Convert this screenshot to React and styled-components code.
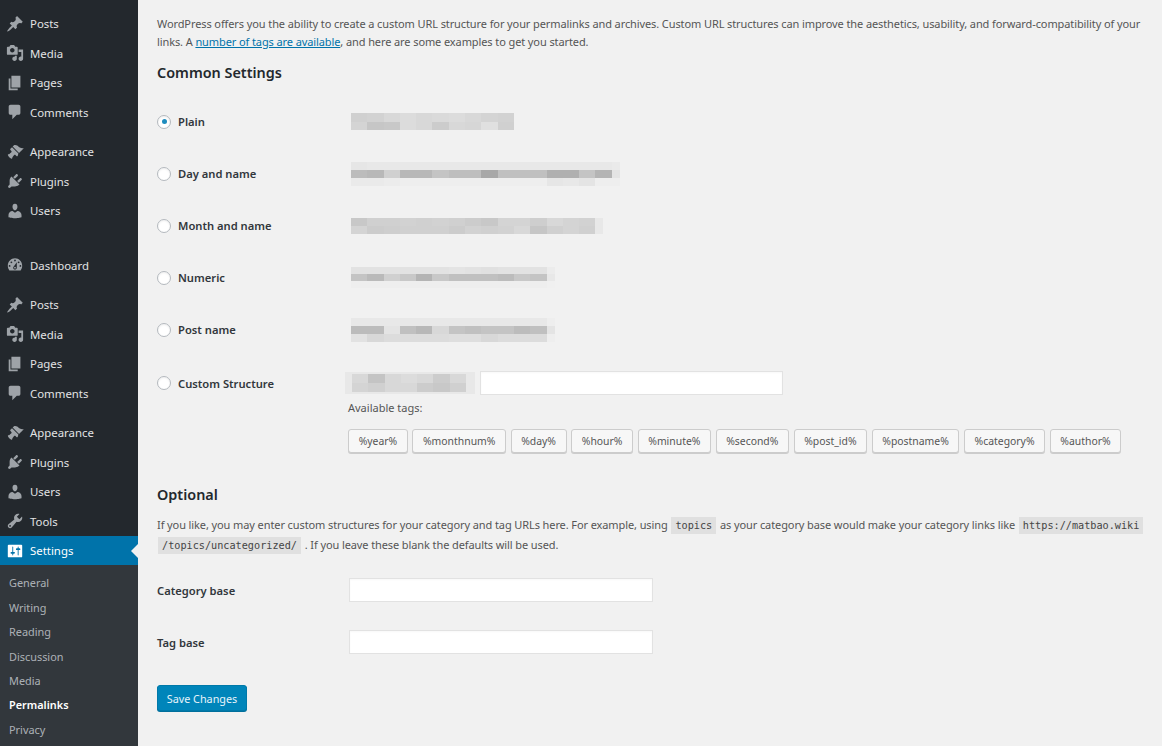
import * as React from 'react';
import styled, { createGlobalStyle } from 'styled-components';

const GlobalStyle = createGlobalStyle`
  html, body {
    margin: 0;
    height: 100%;
    overflow: hidden;
    background: #f1f1f1;
  }
  body {
    font-family: "Noto Sans", "Open Sans", sans-serif;
    font-size: 12px;
    color: #444;
  }
`;

const ICONS = {
  dashboard: 'M3.76 16h12.48c1.1-1.43 1.76-3.21 1.76-5.14 0-4.62-3.58-8.36-8-8.36s-8 3.74-8 8.36c0 1.93.66 3.71 1.76 5.14zM10 4c.55 0 1 .45 1 1s-.45 1-1 1-1-.45-1-1 .45-1 1-1zM6 6c.55 0 1 .45 1 1s-.45 1-1 1-1-.45-1-1 .45-1 1-1zm8 0c.55 0 1 .45 1 1s-.45 1-1 1-1-.45-1-1 .45-1 1-1zm-5.37 5.55L12 7v6c0 1.1-.9 2-2 2s-2-.9-2-2c0-.57.24-1.08.63-1.45zM4 10c.55 0 1 .45 1 1s-.45 1-1 1-1-.45-1-1 .45-1 1-1zm12 0c.55 0 1 .45 1 1s-.45 1-1 1-1-.45-1-1 .45-1 1-1zm-5 3c0-.55-.45-1-1-1s-1 .45-1 1 .45 1 1 1 1-.45 1-1z',
  posts: 'M10.44 3.02l1.82-1.82 6.36 6.35-1.83 1.82c-1.05-.68-2.48-.57-3.41.36l-.75.75c-.92.93-1.04 2.35-.35 3.41l-1.83 1.82-2.41-2.41-2.8 2.79c-.42.42-3.38 2.71-3.8 2.29s1.86-3.39 2.28-3.81l2.79-2.79L4.1 9.36l1.83-1.82c1.05.69 2.48.57 3.4-.36l.75-.75c.93-.92 1.05-2.35.36-3.41z',
  media: 'M13 11V4c0-.55-.45-1-1-1h-1.67L9 1H5L3.67 3H2c-.55 0-1 .45-1 1v7c0 .55.45 1 1 1h10c.55 0 1-.45 1-1zM7 4.5c1.38 0 2.5 1.12 2.5 2.5S8.38 9.5 7 9.5 4.5 8.38 4.5 7 5.62 4.5 7 4.5zM14 6h5v10.5c0 1.38-1.12 2.5-2.5 2.5S14 17.88 14 16.5s1.12-2.5 2.5-2.5c.17 0 .34.02.5.05V9h-3V6zm-4 8.05V13h2v3.5c0 1.38-1.12 2.5-2.5 2.5S7 17.88 7 16.5 8.12 14 9.5 14c.17 0 .34.02.5.05z',
  pages: 'M6 15V2h10v13H6zm-1 1h8v2H3V5h2v11z',
  comments: 'M5 2h9c1.1 0 2 .9 2 2v7c0 1.1-.9 2-2 2h-2l-5 5v-5H5c-1.1 0-2-.9-2-2V4c0-1.1.9-2 2-2z',
  appearance: 'M14.48 11.06L7.41 3.99l1.5-1.5c.5-.56 2.3-.47 3.51.32 1.21.8 1.43 1.28 2.91 2.1 1.18.64 2.45 1.26 4.45.85zm-.71.71L6.7 4.7 4.93 6.47c-.39.39-.39 1.02 0 1.41l1.06 1.06c.39.39.39 1.03 0 1.42-.6.6-1.43 1.27-2.21 1.73-.57.33-1.46.5-1.5.54-1.24 1.24 3.3 5.77 4.53 4.53.05-.04.22-.93.55-1.5.45-.78 1.13-1.61 1.73-2.21.39-.39 1.03-.39 1.42 0l1.06 1.06c.39.39 1.02.39 1.41 0z',
  plugins: 'M13.11 4.36L9.87 7.6 8 5.73l3.24-3.24c.35-.34 1.05-.2 1.56.32.52.51.66 1.21.31 1.55zm-8 1.77l.91-1.12 9.01 9.01-1.19.84c-.71.71-2.63 1.16-3.82 1.16H6.14L4.9 17.26c-.59.59-1.54.59-2.12 0-.59-.58-.59-1.53 0-2.12l1.24-1.24v-3.88c0-1.13.4-3.19 1.09-3.89zm7.26 3.97l3.24-3.24c.34-.35 1.04-.21 1.55.31.52.51.66 1.21.31 1.55l-3.24 3.25z',
  users: 'M10 9.25c-2.27 0-2.73-3.44-2.73-3.44C7 4.02 7.82 2 9.97 2c2.16 0 2.98 2.02 2.71 3.81 0 0-.41 3.44-2.68 3.44zm0 2.57L12.72 10c2.39 0 4.52 2.33 4.52 4.53v2.49s-3.65 1.13-7.24 1.13c-3.65 0-7.24-1.13-7.24-1.13v-2.49c0-2.25 1.94-4.5 4.52-4.5z',
  tools: 'M16.68 9.77c-1.34 1.34-3.3 1.67-4.95.99l-5.41 6.52c-.99.99-2.59.99-3.57 0-.99-.98-.99-2.58 0-3.57l6.52-5.42c-.68-1.65-.35-3.61.99-4.95 1.28-1.28 3.12-1.62 4.72-1.06l-2.89 2.89 2.82 2.82 2.89-2.89c.56 1.6.22 3.44-1.06 4.72zM3.81 16.21c.4.39 1.03.39 1.42 0 .4-.4.4-1.03 0-1.43-.39-.39-1.02-.39-1.42 0-.39.4-.39 1.03 0 1.43z',
  settings: 'M18 16V4c0-.55-.45-1-1-1H3c-.55 0-1 .45-1 1v12c0 .55.45 1 1 1h14c.55 0 1-.45 1-1zM8 11h1c.55 0 1 .45 1 1s-.45 1-1 1H8v1.5c0 .28-.22.5-.5.5s-.5-.22-.5-.5V13H6c-.55 0-1-.45-1-1s.45-1 1-1h1V5.5c0-.28.22-.5.5-.5s.5.22.5.5V11zm5-2h-1c-.55 0-1-.45-1-1s.45-1 1-1h1V5.5c0-.28.22-.5.5-.5s.5.22.5.5V7h1c.55 0 1 .45 1 1s-.45 1-1 1h-1v5.5c0 .28-.22.5-.5.5s-.5-.22-.5-.5V9z',
};

const MENU_TOP = [
  ['posts', 'Posts'], ['media', 'Media'], ['pages', 'Pages'], ['comments', 'Comments'],
];
const MENU_MID = [['appearance', 'Appearance'], ['plugins', 'Plugins'], ['users', 'Users']];

const SUBMENU = ['General', 'Writing', 'Reading', 'Discussion', 'Media', 'Permalinks', 'Privacy'];

const TAGS = ['%year%', '%monthnum%', '%day%', '%hour%', '%minute%', '%second%', '%post_id%', '%postname%', '%category%', '%author%'];

// greys of each pixelated block, one string per row, one hex pair per cell
const BLOCKS = {
  plain: { width: 163, rows: ['d0 d2 d8 dc d8 da dc d8 d4 d2', 'd4 c6 c8 dc d8 cc d8 d6 e0 d0'] },
  day: { width: 269, rows: ['e6 e8 e8 e8 e8 e8 e8 e8 e8 e8 e8 e8 e8 e8 e8 e8 ea', 'bc b8 d0 b8 b8 c4 be be a8 c0 c0 c0 b0 b0 c4 b4 e4', 'ea ea ec ee ee ee ee ee ee ee ee ee e6 e8 e4 ee ee'] },
  month: { width: 252, rows: ['c8 d0 d0 d2 d0 d2 d0 cc c8 d4 d4 ce d8 d4 d2 e8', 'd4 cc ce d0 d0 d0 cc d2 d0 d2 d8 c6 d0 d4 d0 e8'] },
  numeric: { width: 204, rows: ['e2 e2 e2 e2 e2 e2 e4 e2 e0 e2 e2 e2 ec', 'c4 ba d0 c8 b4 c8 c0 c0 c0 bc c8 c4 e8', 'ee ee ee ee ee ee ee ee ee ee ee ee f0'] },
  postname: { width: 204, rows: ['e8 e8 e8 e8 e8 e8 e8 e8 e8 e8 e8 e8 ee', 'bc bc e4 c0 b8 d8 c4 c0 c4 c4 bc c0 e4', 'e2 d8 dc dc dc dc de de d8 dc dc dc ee'] },
  custom: { width: 114, rows: ['d8 c4 d8 dc d8 cc d8', 'd4 d0 d8 d8 cc c8 d0'] },
};

const Page = styled.div`
  display: flex;
  width: 1162px;
  height: 746px;
  overflow: hidden;
`;

const Sidebar = styled.nav`
  flex: none;
  width: 138px;
  height: 746px;
  background: #23282d;
  padding-top: 8.8px;
  box-sizing: border-box;
`;

const MenuGroup = styled.div`
  margin-bottom: ${props => props.$gap}px;
`;

const MenuItem = styled.div`
  position: relative;
  display: flex;
  align-items: center;
  height: 29.5px;
  padding-left: 6px;
  color: ${props => (props.$active ? '#fff' : '#e2e3e4')};
  background: ${props => (props.$active ? '#0073aa' : 'transparent')};
  font-size: 11.4px;
`;

const MenuIcon = styled.svg`
  flex: none;
  width: 18px;
  height: 18px;
  margin-right: 6px;
  fill: ${props => (props.$active ? '#fff' : '#9ea3a8')};
`;

const ActiveArrow = styled.span`
  position: absolute;
  right: 0;
  top: 50%;
  margin-top: -7px;
  border: 7px solid transparent;
  border-left-width: 0;
  border-right-color: #f1f1f1;
`;

const Submenu = styled.div`
  background: #32373c;
  padding: 6.2px 0 0 9px;
  height: 200px;
`;

const SubItem = styled.div`
  height: 24.4px;
  line-height: 24.4px;
  font-size: 10.9px;
  color: ${props => (props.$current ? '#fff' : 'rgba(240,245,250,0.65)')};
  font-weight: ${props => (props.$current ? 600 : 400)};
`;

const Content = styled.main`
  flex: 1;
  min-width: 0;
  padding: 15px 14px 0 19px;
`;

const Paragraph = styled.p`
  margin: ${props => props.$top || 0}px 0 0;
  font-size: 11px;
  letter-spacing: -0.1px;
  line-height: ${props => props.$line || 18}px;
  color: #555;
`;

const Link = styled.a`
  color: #0073aa;
  text-decoration: underline;
`;

const Heading = styled.h2`
  margin: ${props => props.$top}px 0 0;
  font-size: 14.4px;
  line-height: 20px;
  font-weight: 600;
  color: #23282d;
`;

const OptionRow = styled.div`
  display: flex;
  align-items: center;
  height: 17px;
  margin-top: ${props => props.$top}px;
`;

const OptionLabel = styled.label`
  display: flex;
  align-items: center;
  flex: none;
  width: 194px;
  font-size: 11.2px;
  font-weight: 600;
  color: #32373c;
`;

const Radio = styled.span`
  flex: none;
  display: flex;
  align-items: center;
  justify-content: center;
  box-sizing: border-box;
  width: 14px;
  height: 14px;
  margin-right: 7px;
  border: 1px solid #b4b9be;
  border-radius: 50%;
  background: #fff;
  box-shadow: inset 0 1px 2px rgba(0, 0, 0, 0.07);
`;

const RadioDot = styled.span`
  width: 5px;
  height: 5px;
  border-radius: 50%;
  background: #1e8cbe;
`;

const Block = styled.div`
  flex: none;
  display: grid;
  grid-auto-rows: 1fr;
  overflow: hidden;
  height: ${props => props.$height}px;
  filter: blur(0.6px);
`;

const BlockRow = styled.div`
  display: flex;
`;

const BlockCell = styled.span`
  flex: none;
  display: block;
  width: 16.3px;
  height: 100%;
`;

const BlockFrame = styled.div`
  flex: none;
  box-sizing: border-box;
  width: 130px;
  padding: 2px 9px 2px 7px;
  background: #e8e8e8;
`;

const Mosaic = ({ name, height }) => (
  <Block $height={height} style={{ width: BLOCKS[name].width }}>
    {BLOCKS[name].rows.map((row, r) => (
      <BlockRow key={r}>
        {row.split(' ').map((g, c) => (
          <BlockCell key={c} style={{ background: `#${g}${g}${g}` }} />
        ))}
      </BlockRow>
    ))}
  </Block>
);

const TextInput = styled.div`
  box-sizing: border-box;
  flex: none;
  width: ${props => props.$width}px;
  height: 24px;
  background: #fff;
  border: 1px solid #e2e2e2;
  box-shadow: inset 0 1px 2px rgba(0, 0, 0, 0.03);
`;

const CustomBody = styled.div`
  display: flex;
  flex-direction: column;
  margin-left: -6px;
`;

const CustomField = styled.div`
  display: flex;
  align-items: center;
  gap: 5px;
`;

const CustomRow = styled.div`
  display: flex;
  align-items: flex-start;
  margin-top: 33px;
`;

const CustomLabel = styled(OptionLabel)`
  height: 24px;
`;

const AvailableLabel = styled.div`
  margin: 4px 0 0 3px;
  font-size: 11px;
  line-height: 18px;
  color: #555;
`;

const TagList = styled.div`
  display: flex;
  gap: 4.5px;
  margin: 12px 0 0 3px;
`;

const TagButton = styled.span`
  box-sizing: border-box;
  display: block;
  height: 24px;
  line-height: 22px;
  padding: 0 9.65px;
  font-size: 10.4px;
  color: #555;
  background: #f7f7f7;
  border: 1px solid #ccc;
  border-radius: 3px;
  box-shadow: 0 1px 0 #ccc;
  white-space: nowrap;
`;

const Code = styled.code`
  font-family: "DejaVu Sans Mono", "Liberation Mono", monospace;
  font-size: 10.2px;
  letter-spacing: 0;
  padding: 3px 4px;
  margin: 0 1px;
  background: rgba(0, 0, 0, 0.07);
  color: #444;
`;

const FieldRow = styled.div`
  display: flex;
  align-items: center;
  height: 24px;
  margin-top: ${props => props.$top}px;
`;

const FieldLabel = styled.label`
  flex: none;
  width: 192px;
  font-size: 11.2px;
  font-weight: 600;
  color: #32373c;
`;

const SaveButton = styled.button`
  display: block;
  box-sizing: border-box;
  margin-top: 31px;
  width: 90px;
  height: 26px;
  padding: 0;
  font-family: inherit;
  font-size: 10.8px;
  color: #e8f4fa;
  background: #0085ba;
  border: 1px solid #0079a9;
  border-radius: 3px;
  box-shadow: 0 1px 0 #006f9c;
`;

const Icon = ({ name, active }) => (
  <MenuIcon $active={active} viewBox="0 0 20 20">
    <path d={ICONS[name]} />
  </MenuIcon>
);

const MenuList = ({ items }) =>
  items.map(([icon, label]) => (
    <MenuItem key={label}>
      <Icon name={icon} />
      {label}
    </MenuItem>
  ));

const Option = ({ label, block, height, top, checked }) => (
  <OptionRow $top={top}>
    <OptionLabel>
      <Radio>{checked && <RadioDot />}</Radio>
      {label}
    </OptionLabel>
    <Mosaic name={block} height={height} />
  </OptionRow>
);

export default function App() {
  return (
    <Page>
      <GlobalStyle />
      <Sidebar>
        <MenuGroup $gap={10}><MenuList items={MENU_TOP} /></MenuGroup>
        <MenuGroup $gap={25}><MenuList items={MENU_MID} /></MenuGroup>
        <MenuGroup $gap={10}><MenuList items={[['dashboard', 'Dashboard']]} /></MenuGroup>
        <MenuGroup $gap={10}><MenuList items={MENU_TOP} /></MenuGroup>
        <MenuGroup $gap={0}><MenuList items={MENU_MID} /></MenuGroup>
        <MenuList items={[['tools', 'Tools']]} />
        <MenuItem $active>
          <Icon name="settings" active />
          Settings
          <ActiveArrow />
        </MenuItem>
        <Submenu>
          {SUBMENU.map(item => (
            <SubItem key={item} $current={item === 'Permalinks'}>{item}</SubItem>
          ))}
        </Submenu>
      </Sidebar>
      <Content>
        <Paragraph>
          WordPress offers you the ability to create a custom URL structure for your permalinks and archives. Custom URL structures can improve the aesthetics, usability, and forward-compatibility of your links. A <Link>number of tags are available</Link>, and here are some examples to get you started.
        </Paragraph>
        <Heading $top={12}>Common Settings</Heading>
        <Option label="Plain" block="plain" height={17} top={30} checked />
        <Option label="Day and name" block="day" height={24} top={35} />
        <Option label="Month and name" block="month" height={16} top={35} />
        <Option label="Numeric" block="numeric" height={21} top={35} />
        <Option label="Post name" block="postname" height={24} top={35} />
        <CustomRow>
          <CustomLabel>
            <Radio />
            Custom Structure
          </CustomLabel>
          <CustomBody>
            <CustomField>
              <BlockFrame><Mosaic name="custom" height={18} /></BlockFrame>
              <TextInput $width={303} />
            </CustomField>
            <AvailableLabel>Available tags:</AvailableLabel>
            <TagList>
              {TAGS.map(tag => <TagButton key={tag}>{tag}</TagButton>)}
            </TagList>
          </CustomBody>
        </CustomRow>
        <Heading $top={32}>Optional</Heading>
        <Paragraph $top={10} $line={19}>
          If you like, you may enter custom structures for your category and tag URLs here. For example, using <Code>topics</Code> as your category base would make your category links like <Code>https://matbao.wiki</Code><br /><Code>/topics/uncategorized/</Code> . If you leave these blank the defaults will be used.
        </Paragraph>
        <FieldRow $top={23}>
          <FieldLabel>Category base</FieldLabel>
          <TextInput $width={304} />
        </FieldRow>
        <FieldRow $top={28}>
          <FieldLabel>Tag base</FieldLabel>
          <TextInput $width={304} />
        </FieldRow>
        <SaveButton>Save Changes</SaveButton>
      </Content>
    </Page>
  );
}
